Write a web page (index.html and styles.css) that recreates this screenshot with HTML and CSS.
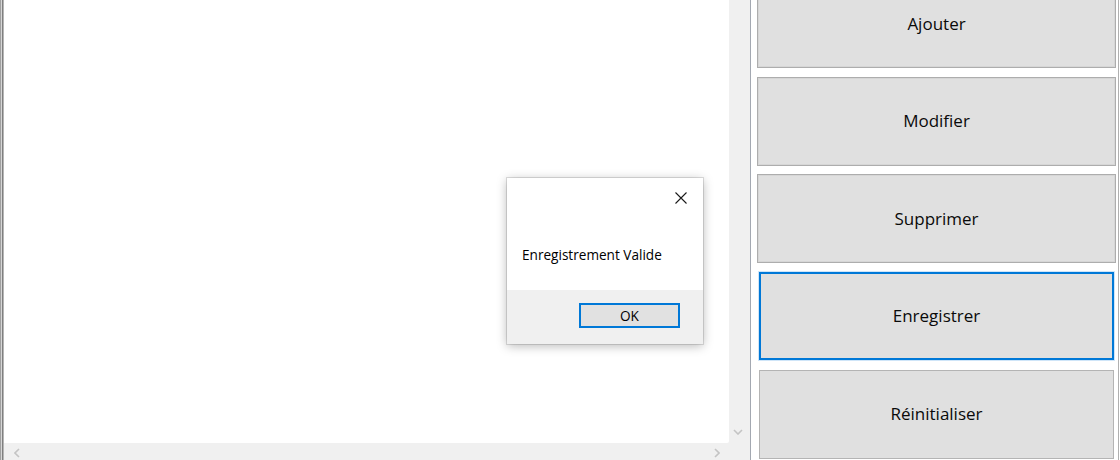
FILE: index.html
```html
<!DOCTYPE html>
<html lang="fr">
<head>
<meta charset="utf-8">
<title>Enregistrement</title>
<link rel="stylesheet" href="styles.css">
</head>
<body>
<div class="window">
  <div class="left-pane">
    <div class="list-area"></div>
    <div class="vscroll">
      <svg class="chev chev-down" width="10" height="6" viewBox="0 0 10 6"><path d="M1 1 L5 5 L9 1" fill="none" stroke="#c4c4c4" stroke-width="1.6"/></svg>
    </div>
    <div class="hscroll">
      <svg class="chev" width="6" height="10" viewBox="0 0 6 10"><path d="M5 1 L1 5 L5 9" fill="none" stroke="#c4c4c4" stroke-width="1.6"/></svg>
      <svg class="chev" width="6" height="10" viewBox="0 0 6 10"><path d="M1 1 L5 5 L1 9" fill="none" stroke="#c4c4c4" stroke-width="1.6"/></svg>
    </div>
    <div class="corner"></div>
  </div>
  <div class="right-pane">
    <div class="buttons">
      <button class="btn">Ajouter</button>
      <button class="btn">Modifier</button>
      <button class="btn">Supprimer</button>
      <button class="btn btn-focus">Enregistrer</button>
      <button class="btn btn-narrow">Réinitialiser</button>
    </div>
  </div>
</div>

<div class="dialog">
  <div class="dialog-body">
    <div class="dialog-head">
      <svg class="close" width="12" height="12" viewBox="0 0 12 12"><path d="M0.5 0.5 L11.5 11.5 M11.5 0.5 L0.5 11.5" stroke="#1a1a1a" stroke-width="1.1" fill="none"/></svg>
    </div>
    <p class="message">Enregistrement Valide</p>
  </div>
  <div class="dialog-foot">
    <button class="ok">OK</button>
  </div>
</div>
</body>
</html>
```

FILE: styles.css
```css
html, body {
  margin: 0;
  padding: 0;
  width: 1120px;
  height: 460px;
  overflow: hidden;
  background: #ffffff;
  font-family: "Open Sans", "Noto Sans", sans-serif;
}

.window {
  display: flex;
  height: 460px;
}

.left-pane {
  width: 751px;
  box-sizing: border-box;
  flex: none;
  border-right: 1px solid #a3a8b1;
  display: grid;
  grid-template-columns: 725px 21px;
  grid-template-rows: 443px 17px;
  padding-left: 4px;
  box-shadow: inset 1px 0 #a0a0a0, inset 2px 0 #d6d6d6, inset 3px 0 #7f7f7f, inset 4px 0 #b5b5b5;
  background: #f0f0f0;
}

.list-area {
  background: #ffffff;
  border-bottom-right-radius: 2px;
}

.vscroll {
  background: #f0f0f0;
  display: flex;
  align-items: flex-end;
  justify-content: center;
  padding-bottom: 8px;
  padding-right: 3px;
}

.hscroll {
  background: #f0f0f0;
  display: flex;
  justify-content: space-between;
  align-items: center;
  padding: 2px 9px 0 10px;
}

.corner {
  background: #f0f0f0;
}

.chev { display: block; }

.right-pane {
  flex: none;
  width: 368px;
  box-sizing: border-box;
  border-right: 1px solid #b0b0b0;
  overflow: hidden;
  padding-left: 6px;
}

.buttons {
  display: flex;
  flex-direction: column;
  gap: 8.7px;
  margin-top: -21px;
  width: 359px;
}

.btn {
  height: 89px;
  flex: none;
  box-sizing: border-box;
  background: #e0e0e0;
  border: 1px solid #adadad;
  box-shadow: inset 0 0 0 1px #d6d6d6;
  font-family: "Open Sans", "Noto Sans", sans-serif;
  font-size: 17px;
  font-weight: 500;
  color: #0a0a0a;
  padding: 0 0 1px;
  margin: 0;
}

.btn-focus {
  margin: 0 2px;
  border: 2px solid #0078d7;
  box-shadow: 0 0 0 1px #cfe5f8;
  height: 88px;
}

.btn-narrow {
  margin: 1px 2px 0;
  box-shadow: none;
  border-color: #b4b4b4;
}

.dialog {
  position: absolute;
  left: 507px;
  top: 178px;
  width: 196px;
  height: 166px;
  background: #f0f0f0;
  box-shadow: 0 0 0 1px rgba(0,0,0,0.12), 0 2px 10px rgba(0,0,0,0.28);
  display: flex;
  flex-direction: column;
}

.dialog-body {
  background: #ffffff;
  height: 112px;
}

.dialog-head {
  height: 40px;
  display: flex;
  justify-content: flex-end;
  align-items: flex-start;
  padding: 14px 16px 0 0;
  box-sizing: border-box;
}

.message {
  margin: 27px 0 0 15px;
  font-size: 13.6px;
  font-weight: 500;
  color: #000;
}

.dialog-foot {
  flex: 1;
  display: flex;
  justify-content: flex-end;
  align-items: flex-start;
  padding: 13px 23px 0 0;
}

.ok {
  width: 101px;
  height: 25px;
  box-sizing: border-box;
  background: #e1e1e1;
  border: 2px solid #0078d7;
  font-family: "Open Sans", "Noto Sans", sans-serif;
  font-size: 13.6px;
  font-weight: 500;
  color: #000;
  padding: 0;
}
```
